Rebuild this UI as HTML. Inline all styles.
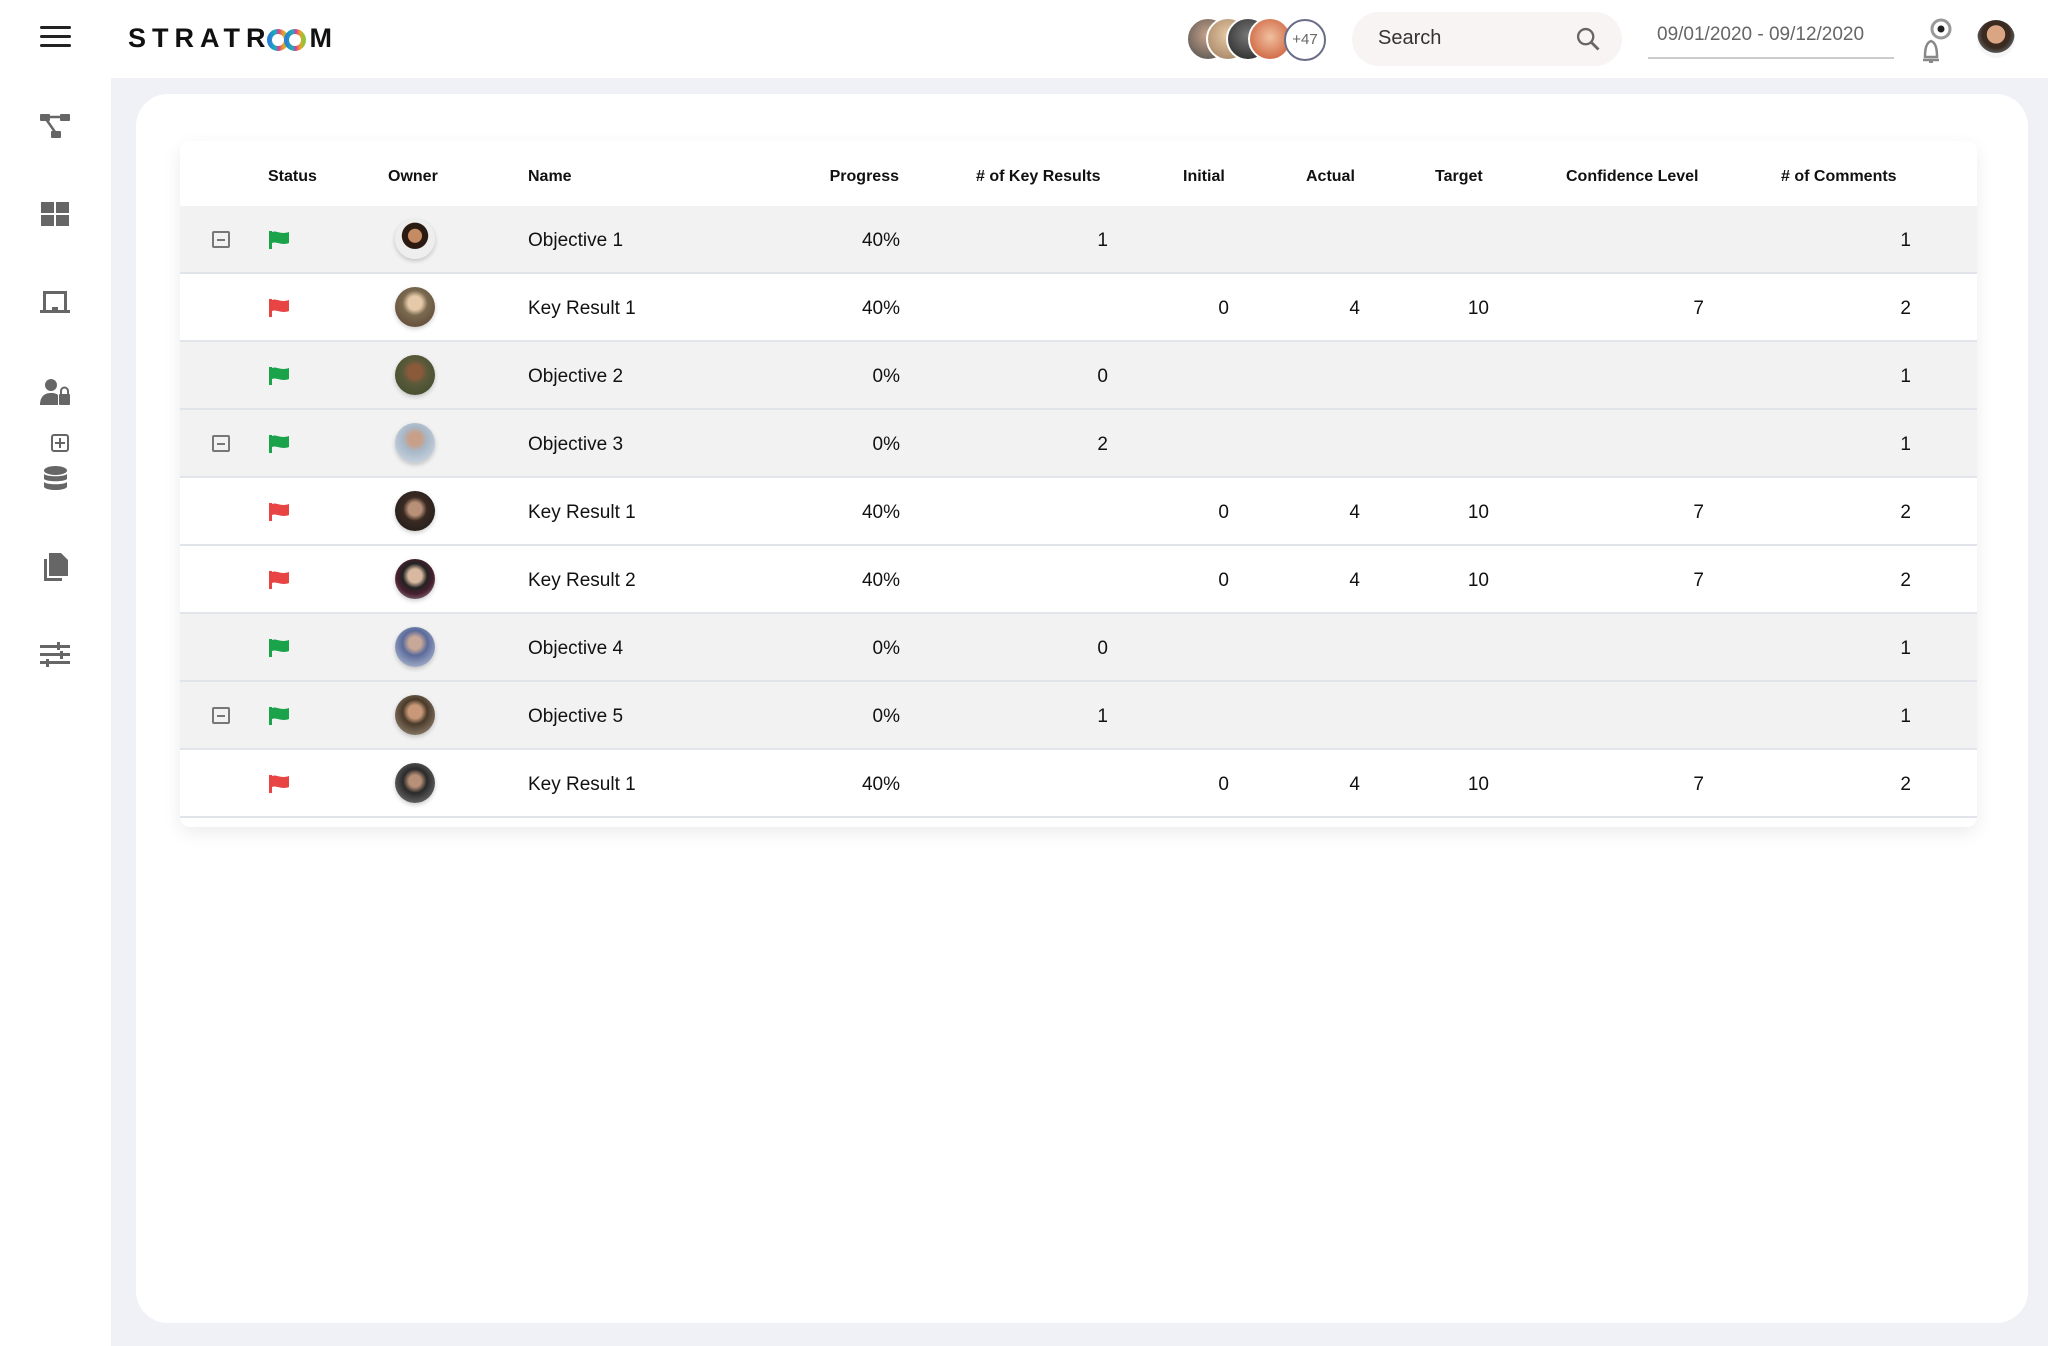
<!DOCTYPE html>
<html><head><meta charset="utf-8"><style>
*{margin:0;padding:0;box-sizing:border-box}
body{width:2048px;height:1346px;background:#fff;font-family:"Liberation Sans",sans-serif;color:#111;position:relative;overflow:hidden}
.abs{position:absolute}
#main{left:111px;top:78px;width:1937px;height:1268px;background:#f0f1f6}
#card{left:136px;top:94px;width:1892px;height:1229px;background:#fff;border-radius:32px}
#tbl{left:180px;top:141px;width:1797px;height:686px;background:#fff;border-radius:10px;box-shadow:0 6px 18px rgba(0,0,0,.08);overflow:hidden}
.hd{font-size:16px;font-weight:bold;top:27px;position:absolute;white-space:nowrap}
.row{position:absolute;left:0;width:1797px;height:68px;border-bottom:2px solid #e1e4ea}
.row.o{background:#f2f2f2}
.c{position:absolute;top:24px;font-size:19px;white-space:nowrap}
.r{text-align:right;width:100px}
.mb{position:absolute;left:32px;top:25px;width:18px;height:17px;border:2px solid #777;border-radius:2px}
.mb:after{content:"";position:absolute;left:3px;right:3px;top:6px;height:2px;background:#777}
.fl{position:absolute;left:88px;top:24px}
.av{position:absolute;left:215px;top:13px;width:40px;height:40px;border-radius:50%;box-shadow:0 2px 5px rgba(0,0,0,.2)}
.si{position:absolute;left:40px;fill:#666}
</style></head><body>
<div class="abs" style="left:40px;top:26px;width:31px;height:3px;background:#222;border-radius:2px"></div>
<div class="abs" style="left:40px;top:35px;width:31px;height:3px;background:#222;border-radius:2px"></div>
<div class="abs" style="left:40px;top:44px;width:31px;height:3px;background:#222;border-radius:2px"></div>
<div class="abs" style="left:128px;top:23px;font-size:27px;font-weight:bold;letter-spacing:6px;color:#111">STRATR<span style="display:inline-block;width:38px"></span>M</div>
<svg class="abs" style="left:264px;top:28px" width="50" height="24" viewBox="0 0 50 24"><defs><linearGradient id="g" x1="0" x2="1"><stop offset="0" stop-color="#2a7fd8"/><stop offset=".35" stop-color="#19b3b0"/><stop offset=".55" stop-color="#d83aa0"/><stop offset=".8" stop-color="#f0a020"/><stop offset="1" stop-color="#8fc43a"/></linearGradient></defs><circle cx="14" cy="12" r="8.5" fill="none" stroke="url(#g)" stroke-width="5"/><circle cx="31" cy="12" r="8.5" fill="none" stroke="url(#g)" stroke-width="5"/></svg>

<div class="abs" style="left:1186px;top:17px;width:44px;height:44px;border-radius:50%;background:radial-gradient(circle at 50% 40%,#c9a58b,#4a4a4a);border:2px solid #fff"></div>
<div class="abs" style="left:1206px;top:17px;width:44px;height:44px;border-radius:50%;background:radial-gradient(circle at 50% 40%,#e8c9a6,#9b7b5a);border:2px solid #fff"></div>
<div class="abs" style="left:1226px;top:17px;width:44px;height:44px;border-radius:50%;background:radial-gradient(circle at 50% 40%,#777,#222);border:2px solid #fff"></div>
<div class="abs" style="left:1248px;top:17px;width:44px;height:44px;border-radius:50%;background:radial-gradient(circle at 50% 45%,#f0c0a0,#c8502a);border:2px solid #fff"></div>
<div class="abs" style="left:1284px;top:19px;width:42px;height:42px;border-radius:50%;background:#fff;border:2px solid #6a6d86;font-size:15px;color:#666;text-align:center;line-height:38px">+47</div>

<div class="abs" style="left:1352px;top:12px;width:270px;height:54px;border-radius:27px;background:#f7f4f3"></div>
<div class="abs" style="left:1378px;top:27px;font-size:20px;color:#333">Search</div>
<svg class="abs" style="left:1574px;top:25px" width="28" height="28" viewBox="0 0 24 24"><circle cx="10" cy="10" r="6.5" fill="none" stroke="#666" stroke-width="2"/><path d="M15 15l6 6" stroke="#666" stroke-width="2.4"/></svg>
<div class="abs" style="left:1657px;top:24px;font-size:19px;color:#666">09/01/2020 - 09/12/2020</div>
<div class="abs" style="left:1648px;top:57px;width:246px;height:2px;background:#ccc"></div>
<svg class="abs" style="left:1914px;top:14px" width="40" height="50" viewBox="0 0 40 50"><circle cx="27" cy="15" r="9" fill="none" stroke="#999" stroke-width="3"/><circle cx="27" cy="15" r="3.5" fill="#222"/><path d="M9 46h16M11 43c0-8 1-14 6-16 5 2 6 8 6 16z" fill="none" stroke="#888" stroke-width="2.5"/><path d="M15 48h4" stroke="#888" stroke-width="2"/></svg>
<div class="abs" style="left:1977px;top:20px;width:38px;height:38px;border-radius:50%;background:radial-gradient(circle at 50% 38%,#d9a583 0 30%,#3a2a20 31% 45%,#555 60%,#f5f5f5 62%)"></div>

<svg class="si" style="top:113px" width="30" height="28" viewBox="0 0 30 28"><rect x="0" y="1" width="10" height="7" rx="1"/><rect x="20" y="1" width="10" height="7" rx="1"/><rect x="11" y="18" width="10" height="7" rx="1"/><path d="M9 4h12M6 6l9 13" stroke="#666" stroke-width="2.5"/></svg>
<svg class="si" style="top:201px" width="30" height="26" viewBox="0 0 30 26"><rect x="1" y="1" width="13" height="11"/><rect x="16" y="1" width="13" height="11"/><rect x="1" y="14" width="13" height="11"/><rect x="16" y="14" width="13" height="11"/></svg>
<svg class="si" style="top:289px" width="30" height="26" viewBox="0 0 30 26"><path d="M3 2h24v19h-3V5H6v16H3z"/><rect x="0" y="21" width="30" height="3"/><rect x="12" y="18" width="6" height="3"/></svg>
<svg class="si" style="top:378px" width="30" height="28" viewBox="0 0 30 28"><circle cx="11" cy="7" r="6"/><path d="M0 27c0-8 4-12 11-12 4 0 6 1 7 2v10z"/><rect x="19" y="16" width="11" height="11" rx="1"/><path d="M21 16v-3a3.5 3.5 0 017 0v3" fill="none" stroke="#666" stroke-width="2"/></svg>
<svg class="abs" style="left:51px;top:434px" width="18" height="18" viewBox="0 0 18 18"><rect x="1" y="1" width="16" height="16" rx="2" fill="none" stroke="#666" stroke-width="2"/><path d="M9 4v10M4 9h10" stroke="#666" stroke-width="2"/></svg>
<svg class="si" style="left:44px;top:466px" width="23" height="26" viewBox="0 0 23 26"><ellipse cx="11.5" cy="4.5" rx="11.5" ry="4.5"/><path d="M0 8c3 3 20 3 23 0v5c-3 3-20 3-23 0zM0 16c3 3 20 3 23 0v5c-3 4-20 4-23 0z"/></svg>
<svg class="si" style="left:44px;top:553px" width="24" height="28" viewBox="0 0 24 28"><path d="M0 6h3v19h15v3H0z"/><path d="M5 0h12l7 7v16H5z"/></svg>
<svg class="si" style="top:642px" width="30" height="26" viewBox="0 0 30 26"><rect x="0" y="3" width="30" height="3"/><rect x="0" y="11" width="30" height="3"/><rect x="0" y="19" width="30" height="3"/><rect x="17" y="0" width="3" height="8"/><rect x="20" y="9" width="3" height="8"/><rect x="6" y="17" width="3" height="8"/></svg>

<div id="main" class="abs"></div>
<div id="card" class="abs"></div>
<div id="tbl" class="abs">
 <div class="hd" style="left:88px">Status</div>
 <div class="hd" style="left:208px">Owner</div>
 <div class="hd" style="left:348px">Name</div>
 <div class="hd" style="left:619px;width:100px;text-align:right">Progress</div>
 <div class="hd" style="left:796px">#&nbsp;of Key Results</div>
 <div class="hd" style="left:1003px">Initial</div>
 <div class="hd" style="left:1126px">Actual</div>
 <div class="hd" style="left:1255px">Target</div>
 <div class="hd" style="left:1386px">Confidence Level</div>
 <div class="hd" style="left:1601px"># of Comments</div>
</div>
<div class="abs" style="left:180px;top:206px;width:1797px">
<div class="row o" style="top:0"><div class="mb"></div><svg class="fl" width="22" height="20" viewBox="0 0 22 20"><path d="M1 1h3v18H1z M4 2c5-2 8 3 17 0v11c-8 3-12-2-17 0z" fill="#1aa34a"/></svg><div class="av" style="background:radial-gradient(circle at 50% 42%,#c58b62 0 22%,#2b1a12 24% 42%,#eee 44%)"></div><div class="c" style="left:348px">Objective 1</div><div class="c r" style="left:620px">40%</div><div class="c r" style="left:828px">1</div><div class="c r" style="left:1631px">1</div></div>
<div class="row" style="top:68px"><svg class="fl" width="22" height="20" viewBox="0 0 22 20"><path d="M1 1h3v18H1z M4 2c5-2 8 3 17 0v11c-8 3-12-2-17 0z" fill="#e84444"/></svg><div class="av" style="background:radial-gradient(circle at 50% 40%,#e5c9a8 0 22%,#7a6a50 40%,#5a4030)"></div><div class="c" style="left:348px">Key Result 1</div><div class="c r" style="left:620px">40%</div><div class="c r" style="left:949px">0</div><div class="c r" style="left:1080px">4</div><div class="c r" style="left:1209px">10</div><div class="c r" style="left:1424px">7</div><div class="c r" style="left:1631px">2</div></div>
<div class="row o" style="top:136px"><svg class="fl" width="22" height="20" viewBox="0 0 22 20"><path d="M1 1h3v18H1z M4 2c5-2 8 3 17 0v11c-8 3-12-2-17 0z" fill="#1aa34a"/></svg><div class="av" style="background:radial-gradient(circle at 50% 42%,#8a5a3a 0 22%,#5a5a3a 40%,#3a4a2a)"></div><div class="c" style="left:348px">Objective 2</div><div class="c r" style="left:620px">0%</div><div class="c r" style="left:828px">0</div><div class="c r" style="left:1631px">1</div></div>
<div class="row o" style="top:204px"><div class="mb"></div><svg class="fl" width="22" height="20" viewBox="0 0 22 20"><path d="M1 1h3v18H1z M4 2c5-2 8 3 17 0v11c-8 3-12-2-17 0z" fill="#1aa34a"/></svg><div class="av" style="background:radial-gradient(circle at 50% 40%,#c8a08a 0 20%,#a8b8c8 40%,#d8e0e8)"></div><div class="c" style="left:348px">Objective 3</div><div class="c r" style="left:620px">0%</div><div class="c r" style="left:828px">2</div><div class="c r" style="left:1631px">1</div></div>
<div class="row" style="top:272px"><svg class="fl" width="22" height="20" viewBox="0 0 22 20"><path d="M1 1h3v18H1z M4 2c5-2 8 3 17 0v11c-8 3-12-2-17 0z" fill="#e84444"/></svg><div class="av" style="background:radial-gradient(circle at 50% 45%,#b89078 0 22%,#3a2a22 40%,#1a1a1a)"></div><div class="c" style="left:348px">Key Result 1</div><div class="c r" style="left:620px">40%</div><div class="c r" style="left:949px">0</div><div class="c r" style="left:1080px">4</div><div class="c r" style="left:1209px">10</div><div class="c r" style="left:1424px">7</div><div class="c r" style="left:1631px">2</div></div>
<div class="row" style="top:340px"><svg class="fl" width="22" height="20" viewBox="0 0 22 20"><path d="M1 1h3v18H1z M4 2c5-2 8 3 17 0v11c-8 3-12-2-17 0z" fill="#e84444"/></svg><div class="av" style="background:radial-gradient(circle at 50% 42%,#d8b8a0 0 22%,#222 40%,#4a2030 60%,#aaa)"></div><div class="c" style="left:348px">Key Result 2</div><div class="c r" style="left:620px">40%</div><div class="c r" style="left:949px">0</div><div class="c r" style="left:1080px">4</div><div class="c r" style="left:1209px">10</div><div class="c r" style="left:1424px">7</div><div class="c r" style="left:1631px">2</div></div>
<div class="row o" style="top:408px"><svg class="fl" width="22" height="20" viewBox="0 0 22 20"><path d="M1 1h3v18H1z M4 2c5-2 8 3 17 0v11c-8 3-12-2-17 0z" fill="#1aa34a"/></svg><div class="av" style="background:radial-gradient(circle at 50% 40%,#c8a898 0 20%,#5a6a9a 40%,#c8d0e0)"></div><div class="c" style="left:348px">Objective 4</div><div class="c r" style="left:620px">0%</div><div class="c r" style="left:828px">0</div><div class="c r" style="left:1631px">1</div></div>
<div class="row o" style="top:476px"><div class="mb"></div><svg class="fl" width="22" height="20" viewBox="0 0 22 20"><path d="M1 1h3v18H1z M4 2c5-2 8 3 17 0v11c-8 3-12-2-17 0z" fill="#1aa34a"/></svg><div class="av" style="background:radial-gradient(circle at 50% 42%,#c89878 0 22%,#4a3a2a 40%,#a89888)"></div><div class="c" style="left:348px">Objective 5</div><div class="c r" style="left:620px">0%</div><div class="c r" style="left:828px">1</div><div class="c r" style="left:1631px">1</div></div>
<div class="row" style="top:544px"><svg class="fl" width="22" height="20" viewBox="0 0 22 20"><path d="M1 1h3v18H1z M4 2c5-2 8 3 17 0v11c-8 3-12-2-17 0z" fill="#e84444"/></svg><div class="av" style="background:radial-gradient(circle at 50% 45%,#b89078 0 20%,#2a2a2a 40%,#888)"></div><div class="c" style="left:348px">Key Result 1</div><div class="c r" style="left:620px">40%</div><div class="c r" style="left:949px">0</div><div class="c r" style="left:1080px">4</div><div class="c r" style="left:1209px">10</div><div class="c r" style="left:1424px">7</div><div class="c r" style="left:1631px">2</div></div>
</div>
</body></html>
